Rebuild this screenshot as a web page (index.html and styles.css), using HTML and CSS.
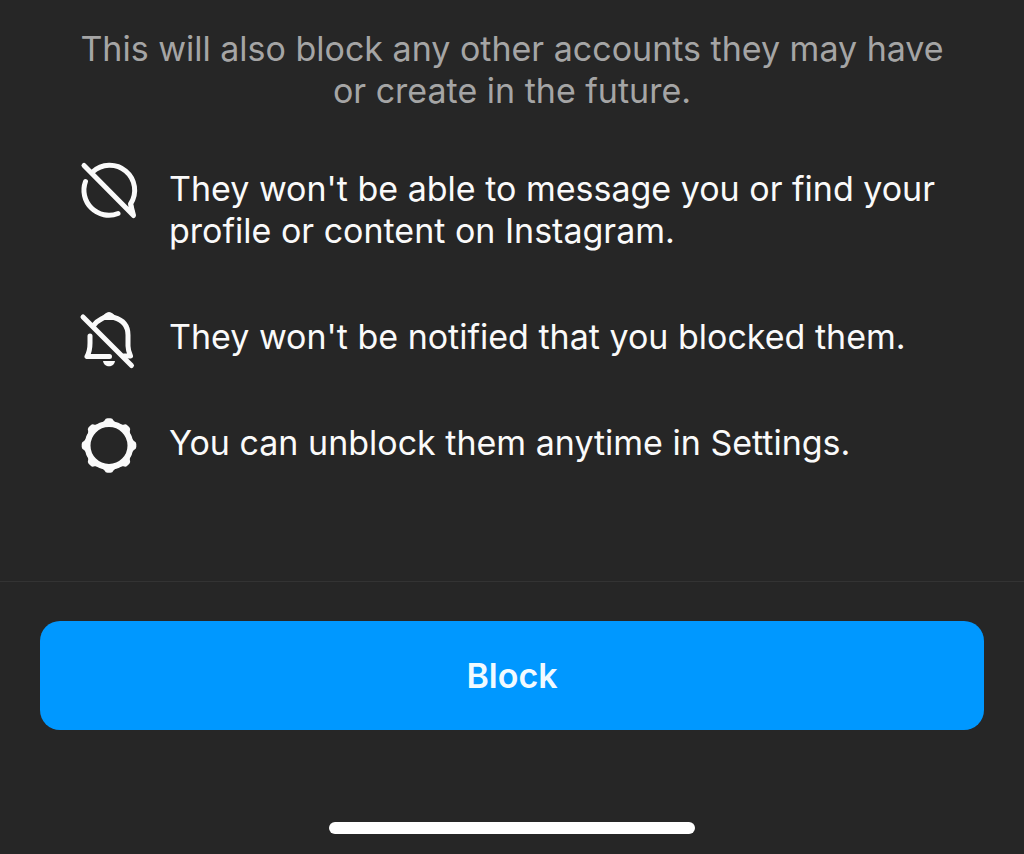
FILE: index.html
```html
<!DOCTYPE html>
<html lang="en">
<head>
<meta charset="utf-8">
<meta name="viewport" content="width=device-width, initial-scale=1">
<title>Block account</title>
<link rel="stylesheet" href="styles.css">
</head>
<body>
<main class="sheet">
  <section class="details">
    <p class="intro">This will also block any other accounts they may have or create in the future.</p>
    <ul class="effects">
      <li class="effect">
        <svg class="icon" viewBox="9 9 60 60" aria-hidden="true">
          <path d="M14 15.500 63.500 65.500 60.500 54A25 25 0 0 0 22.500 22"/>
          <path d="M15.500 31.500A25 25 0 0 0 48 63.500"/>
          <path class="solid" d="M58.500 56 63 53 65 66Z"/>
        </svg>
        <span>They won't be able to message you or find your profile or content on Instagram.</span>
      </li>
      <li class="effect">
        <svg class="icon" viewBox="9 7 60 60" aria-hidden="true">
          <path d="M13 17 61.500 65.500"/>
          <path d="M24 25C27 20.500 31 19.500 34 17.500Q39 13 44 17.500C53 20 58 26 58 35V46Q58 50 60.500 56H54"/>
          <path d="M20 36V43Q20 51 17 56.500H39.500"/>
          <path class="solid" d="M33 61H45C44 68 34 68 33 61Z"/>
          <path class="solid" d="M31 20Q35 12 39 12T47 20Z"/>
        </svg>
        <span>They won't be notified that you blocked them.</span>
      </li>
      <li class="effect">
        <svg class="icon" viewBox="9 8 60 60" aria-hidden="true">
          <circle class="ring" cx="39" cy="40.500" r="21.500"/>
          <g class="solid">
            <path id="tooth" d="M30 18.500Q33.500 17.500 34.500 15.500Q35.500 13.200 37.500 13.200H40.500Q42.500 13.200 43.500 15.500Q44.500 17.500 48 18.500L44 21H34Z"/>
            <use href="#tooth" transform="rotate(45 39 40.500)"/>
            <use href="#tooth" transform="rotate(90 39 40.500)"/>
            <use href="#tooth" transform="rotate(135 39 40.500)"/>
            <use href="#tooth" transform="rotate(180 39 40.500)"/>
            <use href="#tooth" transform="rotate(225 39 40.500)"/>
            <use href="#tooth" transform="rotate(270 39 40.500)"/>
            <use href="#tooth" transform="rotate(315 39 40.500)"/>
          </g>
        </svg>
        <span>You can unblock them anytime in Settings.</span>
      </li>
    </ul>
  </section>
  <footer class="actions">
    <button class="block-button" type="button">Block</button>
    <div class="home-bar"></div>
  </footer>
</main>
</body>
</html>
```

FILE: styles.css
```css
* {
  box-sizing: border-box;
}

body {
  margin: 0;
  background: #262626;
  color: #fafafa;
  font-family: Inter, "Liberation Sans", sans-serif;
  font-size: 34px;
  line-height: 42px;
}

.sheet {
  display: flex;
  flex-direction: column;
  min-height: 100vh;
}

.details {
  flex: 1;
  padding: 28px 79px 64px;
}

.intro {
  margin: 0 0 56px;
  color: #a5a5a5;
  text-align: center;
}

.effects {
  display: flex;
  flex-direction: column;
  gap: 64px;
  margin: 0;
  padding: 0;
  list-style: none;
}

.effect {
  display: flex;
  align-items: flex-start;
  gap: 30px;
}

.icon {
  flex: none;
  width: 60px;
  height: 60px;
  margin: -9px 0;
  overflow: visible;
  fill: none;
  stroke: #fafafa;
  stroke-width: 5;
  stroke-linecap: round;
  stroke-linejoin: round;
}

.ring {
  stroke-width: 6;
}

.solid {
  fill: #fafafa;
  stroke: none;
}

.actions {
  display: flex;
  flex-direction: column;
  align-items: center;
  padding: 39px 40px 20px;
  border-top: 1px solid #333;
}

.block-button {
  width: 100%;
  padding: 34px 20px 33px;
  border: 0;
  border-radius: 20px;
  background: #0098ff;
  color: #f0faff;
  font: inherit;
  font-weight: 600;
  cursor: pointer;
}

.home-bar {
  width: 40%;
  max-width: 366px;
  height: 12px;
  margin-top: 92px;
  border-radius: 6px;
  background: #fff;
}
```
